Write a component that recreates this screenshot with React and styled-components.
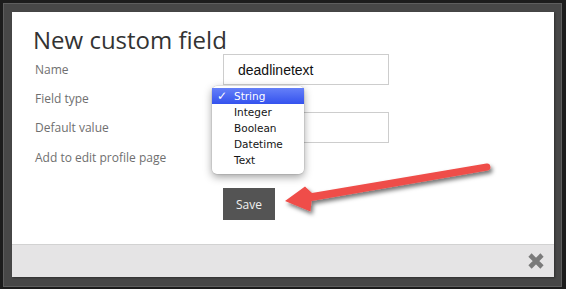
import React from "react";
import styled, { createGlobalStyle } from "styled-components";

const Global = createGlobalStyle`
  html, body { margin: 0; padding: 0; background: #1c1c1c; }
  body { width: 566px; height: 289px; overflow: hidden; font-family: "Open Sans", "DejaVu Sans", sans-serif; }
`;

const Stage = styled.div`
  position: relative;
  width: 566px;
  height: 289px;
  padding: 3px 0 0 3px;
  box-sizing: border-box;
`;

const Frame = styled.div`
  width: 559px;
  height: 284px;
  box-sizing: border-box;
  border: 1px solid #5e5e5e;
  background: #474747;
  padding: 8px 7px 7px 8px;
`;

const Panel = styled.div`
  width: 542px;
  height: 265px;
  display: flex;
  flex-direction: column;
  background: #fff;
  box-shadow: 1px 1px 2px rgba(0, 0, 0, 0.35);
`;

const Body = styled.div`
  flex: 1;
  padding: 16px 0 0 21px;
`;

const Title = styled.h1`
  margin: 0 0 2px;
  font-family: "Open Sans", sans-serif;
  font-weight: 400;
  font-size: 24px;
  line-height: 24px;
  color: #333;
  letter-spacing: 0;
`;

const Form = styled.div`
  display: grid;
  grid-template-columns: 188px 166px;
  grid-template-rows: 31px 27px 31px 28px auto;
  padding-left: 2px;
`;

const Label = styled.div`
  display: flex;
  align-items: center;
  font-family: "Open Sans", sans-serif;
  font-size: 12px;
  color: #6f6f6f;
`;

const Cell = styled.div`
  position: relative;
  display: flex;
  align-items: center;
`;

const Input = styled.div`
  width: 166px;
  height: 31px;
  box-sizing: border-box;
  border: 1px solid #cdcdcd;
  padding-left: 14px;
  display: flex;
  align-items: center;
  font-family: "Liberation Sans", Arial, sans-serif;
  font-size: 14px;
  color: #111;
`;

const Menu = styled.ul`
  position: absolute;
  left: -11px;
  top: 1px;
  z-index: 2;
  width: 92px;
  margin: 0;
  padding: 2px 0 6px;
  list-style: none;
  background: #fff;
  border-radius: 5px;
  box-shadow: 0 3px 9px rgba(0, 0, 0, 0.38), 0 0 0 0.5px rgba(0, 0, 0, 0.12);
`;

const Item = styled.li`
  position: relative;
  height: 16px;
  line-height: 16px;
  padding-left: 22px;
  font-family: "DejaVu Sans", sans-serif;
  font-size: 10.5px;
  color: ${(p) => (p.$active ? "#fff" : "#151515")};
  background: ${(p) =>
    p.$active ? "linear-gradient(#6580f8, #3452ee)" : "transparent"};
`;

const Check = styled.span`
  position: absolute;
  left: 5px;
  top: 0;
  font-size: 12px;
  font-weight: 700;
`;

const SaveButton = styled.button`
  grid-column: 2;
  justify-self: start;
  margin-top: 17px;
  width: 52px;
  height: 32px;
  border: 0;
  padding: 0;
  background: #545454;
  color: #f0f0f0;
  font-family: "Open Sans", sans-serif;
  font-size: 12px;
`;

const Footer = styled.div`
  height: 32px;
  border-top: 1px solid #d2d2d2;
  background: #e5e4e5;
  display: flex;
  align-items: center;
  justify-content: flex-end;
  padding-right: 9px;
`;

const Overlay = styled.svg`
  position: absolute;
  left: 0;
  top: 0;
  pointer-events: none;
`;

const items = ["String", "Integer", "Boolean", "Datetime", "Text"];

export default function App() {
  return (
    <Stage>
      <Global />
      <Frame>
        <Panel>
          <Body>
            <Title>New custom field</Title>
            <Form>
              <Label>Name</Label>
              <Cell>
                <Input>deadlinetext</Input>
              </Cell>
              <Label>Field type</Label>
              <Cell>
                <Menu>
                  {items.map((it, i) => (
                    <Item key={it} $active={i === 0}>
                      {i === 0 && <Check>✓</Check>}
                      {it}
                    </Item>
                  ))}
                </Menu>
              </Cell>
              <Label>Default value</Label>
              <Cell>
                <Input />
              </Cell>
              <Label>Add to edit profile page</Label>
              <Cell />
              <SaveButton>Save</SaveButton>
            </Form>
          </Body>
          <Footer>
            <svg width="18" height="18" viewBox="0 0 18 18">
              <path
                d="M3 3 L15 15 M15 3 L3 15"
                stroke="#7a7a7a"
                strokeWidth="4.6"
                strokeLinecap="butt"
              />
            </svg>
          </Footer>
        </Panel>
      </Frame>
      <Overlay width="566" height="289" viewBox="0 0 566 289">
        <defs>
          <filter id="sh" x="-20%" y="-50%" width="140%" height="200%">
            <feDropShadow dx="2" dy="3" stdDeviation="2" floodColor="#000" floodOpacity="0.55" />
          </filter>
        </defs>
        <g filter="url(#sh)" fill="#ef4d49">
          <path d="M486.4 163.6 L312 193 L305 186.5 L285 201 L310.5 211.5 L311.5 201 L487.6 170.4 A3.4 3.4 0 0 0 486.4 163.6 Z" />
        </g>
      </Overlay>
    </Stage>
  );
}
